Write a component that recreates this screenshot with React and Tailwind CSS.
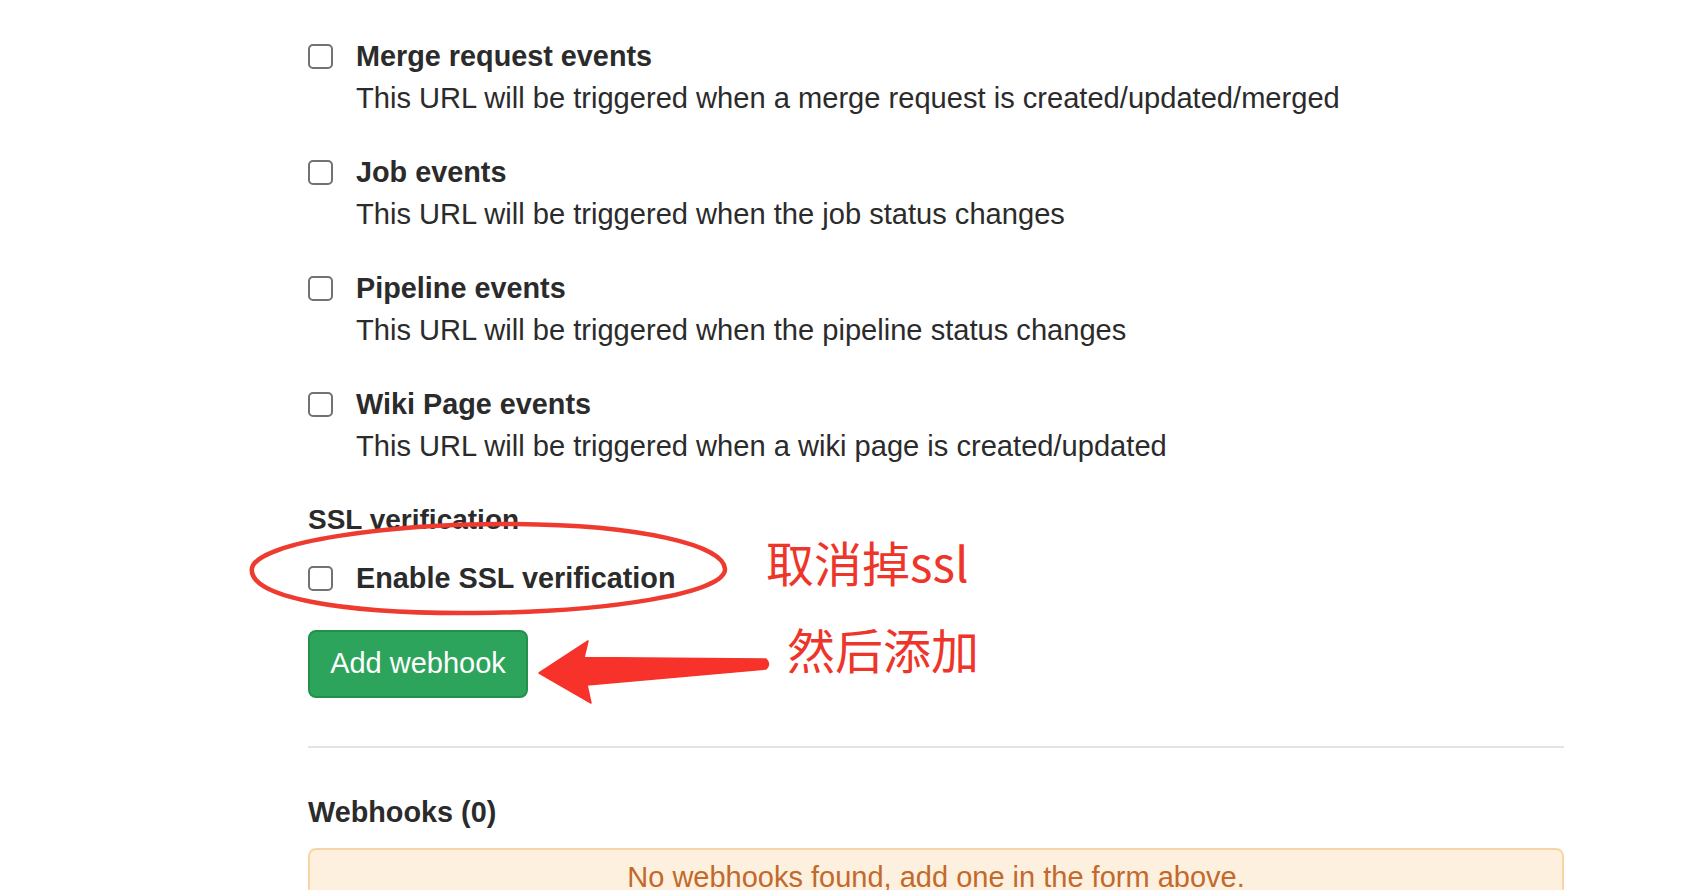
import React from 'react';

const events = [
  { title: 'Merge request events', desc: 'This URL will be triggered when a merge request is created/updated/merged' },
  { title: 'Job events', desc: 'This URL will be triggered when the job status changes' },
  { title: 'Pipeline events', desc: 'This URL will be triggered when the pipeline status changes' },
  { title: 'Wiki Page events', desc: 'This URL will be triggered when a wiki page is created/updated' },
];

function Checkbox() {
  return <span className="block w-[25px] h-[25px] mt-[8px] shrink-0 rounded-[5px] border-2 border-[#727272] bg-white" />;
}

// Red hand-drawn marks laid over the form
function Annotations() {
  return (
    <>
      <svg
        className="absolute left-0 top-0 pointer-events-none"
        width="1706"
        height="890"
        viewBox="0 0 1706 890"
      >
        <path
          d="M252,568 C258,542 390,523 515,524 C640,525 724,545 725,569 C726,593 610,612 475,613 C340,614 247,597 252,568 Z"
          fill="none"
          stroke="#ef3a2f"
          strokeWidth="4.5"
        />
        <path
          d="M539,673 L588,641 L584,657.5 L766,659 Q771,664 766,669 L587,685 L591,703 Z"
          fill="#f7322a"
          stroke="#f7322a"
          strokeWidth="1.5"
          strokeLinejoin="round"
        />
      </svg>
      <div className="absolute left-[766px] top-[537px] text-[48px] leading-none text-[#ee3529] font-['Noto_Sans_CJK_SC',sans-serif] whitespace-nowrap">
        取消掉ssl
      </div>
      <div className="absolute left-[787px] top-[624px] text-[48px] leading-none text-[#ee3529] font-['Noto_Sans_CJK_SC',sans-serif] whitespace-nowrap">
        然后添加
      </div>
    </>
  );
}

export default function App() {
  return (
    <div className="relative min-h-screen w-full bg-white text-[#2b2b2b] font-['Liberation_Sans',Arial,sans-serif]">
      <div className="ml-[308px] w-[1256px] pt-[36px]">
        {events.map((ev) => (
          <div key={ev.title} className="flex gap-[23px] mb-[34px]">
            <Checkbox />
            <div>
              <div className="font-bold text-[28.8px] leading-[40px]">{ev.title}</div>
              <div className="mt-[2px] text-[29.1px] leading-[40px]">{ev.desc}</div>
            </div>
          </div>
        ))}

        <div className="mb-[18px] font-bold text-[28px] leading-[40px]">SSL verification</div>
        <div className="flex gap-[23px] mb-[32px]">
          <Checkbox />
          <div className="font-bold text-[28.8px] leading-[40px]">Enable SSL verification</div>
        </div>

        <button className="mb-[48px] flex h-[68px] w-[220px] items-center justify-center rounded-[8px] border-2 border-[#23914d] bg-[#2da45b] text-[29px] text-white">
          Add webhook
        </button>

        <div className="mb-[44px] h-[2px] bg-[#e4e4e4]" />

        <div className="mb-[16px] font-bold text-[28.8px] leading-[40px]">Webhooks (0)</div>

        <div className="rounded-[8px] border-2 border-[#f6d6a6] bg-[#fdf0df] pt-[7px] pb-[24px] text-center text-[29px] leading-[40px] text-[#c2692c]">
          No webhooks found, add one in the form above.
        </div>
      </div>
      <Annotations />
    </div>
  );
}
